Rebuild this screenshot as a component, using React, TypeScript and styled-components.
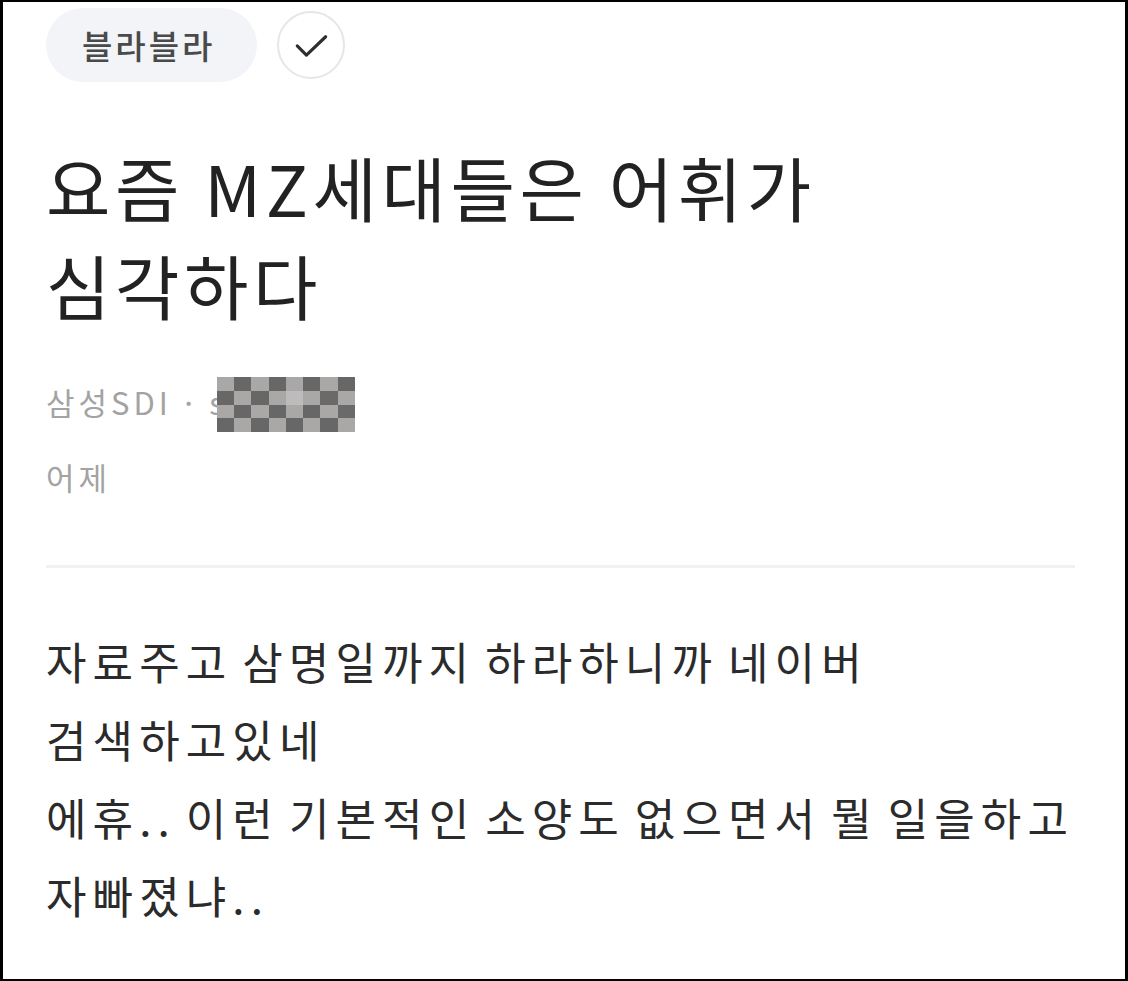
import React from "react";
import styled, { createGlobalStyle, css } from "styled-components";

const GlobalStyle = createGlobalStyle`
  html, body {
    margin: 0;
    padding: 0;
    background: #ffffff;
  }
  body {
    font-family: "Noto Sans CJK KR", "Noto Sans", sans-serif;
  }
`;

const Frame = styled.div`
  width: 1128px;
  height: 981px;
  box-sizing: border-box;
  border: 3px solid #000;
  border-top-width: 2px;
  border-bottom-width: 2px;
  background: #fff;
  padding: 6px 50px 0 43px;
  overflow: hidden;
`;

const TagRow = styled.div`
  display: flex;
  align-items: center;
  gap: 20px;
`;

const Chip = styled.div`
  height: 74px;
  padding: 0 42px 0 36px;
  border-radius: 37px;
  background: #f3f4f7;
  display: flex;
  align-items: center;
  font-size: 33px;
  font-weight: 500;
  letter-spacing: 3px;
  color: #4a4a4a;
`;

const CheckCircle = styled.div`
  width: 64px;
  height: 64px;
  border-radius: 50%;
  border: 2px solid #e6e6e6;
  display: flex;
  align-items: center;
  justify-content: center;
  color: #2e2e2e;
`;

const Title = styled.h1`
  margin: 56px 0 0;
  font-size: 70px;
  font-weight: 400;
  line-height: 98px;
  letter-spacing: 4.6px;
  color: #222;
`;

const Meta = styled.div<{ $gap?: number }>`
  display: flex;
  align-items: center;
  font-size: 31px;
  line-height: 44px;
  letter-spacing: 4px;
  color: #a3a3a3;
  ${(p) =>
    p.$gap &&
    css`
      margin-top: ${p.$gap}px;
    `}
`;

const Dot = styled.span`
  margin: 0 8px;
`;

const Mosaic = styled.div`
  display: grid;
  grid-template-columns: repeat(8, 17.25px);
  grid-template-rows: repeat(4, 13.75px);
  margin: 6px 0 0 -11px;
`;

const Cell = styled.div<{ $shade: string }>`
  background: ${(p) => p.$shade};
`;

const Divider = styled.hr`
  margin: 66px 0 0;
  border: 0;
  height: 3px;
  background: #f1f1f1;
`;

const Body = styled.p`
  margin: 54px 0 0;
  font-size: 44px;
  line-height: 78px;
  letter-spacing: 6.1px;
  word-spacing: -6px;
  color: #2b2b2b;
`;

const shades = [
  ["#aaa7a7", "#676767", "#aaa7a7", "#676767", "#aaa7a7", "#676767", "#aaa7a7", "#676767"],
  ["#676767", "#aaa7a7", "#676767", "#aaa7a7", "#bcbcbc", "#aaa7a7", "#6a6a6a", "#aaa7a7"],
  ["#aaa7a7", "#676767", "#aaa7a7", "#676767", "#aaa7a7", "#676767", "#aaa7a7", "#6a6a6a"],
  ["#676767", "#aaa7a7", "#676767", "#aaa7a7", "#676767", "#aaa7a7", "#676767", "#aaa7a7"],
];

export default function App() {
  return (
    <>
      <GlobalStyle />
      <Frame>
        <TagRow>
          <Chip>블라블라</Chip>
          <CheckCircle>
            <svg width="44" height="44" viewBox="0 0 24 24" fill="none">
              <path
                d="M4.5 12.5l5 5L20 7.5"
                stroke="currentColor"
                strokeWidth="1.7"
                strokeLinecap="round"
                strokeLinejoin="round"
              />
            </svg>
          </CheckCircle>
        </TagRow>

        <Title>
          요즘 MZ세대들은 어휘가
          <br />
          심각하다
        </Title>

        <Meta $gap={37}>
          삼성SDI<Dot>·</Dot>
          <span>s</span>
          <Mosaic>
            {shades.flat().map((s, i) => (
              <Cell key={i} $shade={s} />
            ))}
          </Mosaic>
        </Meta>
        <Meta $gap={23}>어제</Meta>

        <Divider />

        <Body>
          자료주고 삼명일까지 하라하니까 네이버
          <br />
          검색하고있네
          <br />
          에휴.. 이런 기본적인 소양도 없으면서 뭘 일을하고
          <br />
          자빠졌냐..
        </Body>
      </Frame>
    </>
  );
}
